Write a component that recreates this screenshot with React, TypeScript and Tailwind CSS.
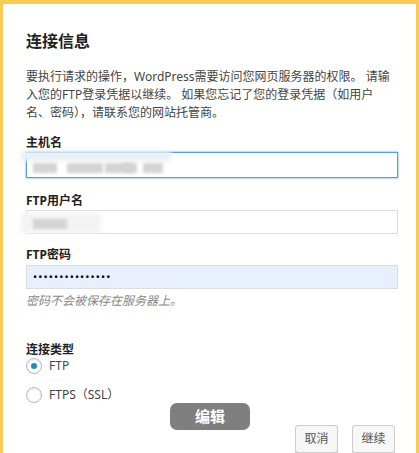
import React from "react";

const font = { fontFamily: '"Noto Sans", "Noto Sans CJK SC", sans-serif' };

function Blur({ className }: { className: string }) {
  return <div className={`absolute bg-[#d4d4d4] blur-[1.5px] ${className}`} />;
}

function Label({ children, className = "" }: { children: React.ReactNode; className?: string }) {
  return <div className={`text-[12px] font-bold text-[#222] leading-[17px] ${className}`}>{children}</div>;
}

function Radio({ checked, label, className = "" }: { checked?: boolean; label: string; className?: string }) {
  return (
    <div className={`flex items-center h-[18px] ${className}`}>
      <span className="w-[16px] h-[16px] rounded-full border border-[#b4b9be] flex items-center justify-center bg-white shadow-[inset_0_1px_2px_rgba(0,0,0,0.1)]">
        {checked && <span className="w-[6px] h-[6px] rounded-full bg-[#1e8cbe]" />}
      </span>
      <span className="ml-[7px] text-[12px] text-[#444]">{label}</span>
    </div>
  );
}

export default function App() {
  return (
    <div className="w-[419px] h-[453px] overflow-hidden bg-white relative" style={font}>
      <div className="h-full flex flex-col border-t-4 border-l-[3px] border-r-[3px] border-[#fbcb57] pl-[23px] pr-[18px]">
        <h2 className="pt-[25px] text-[16px] font-bold text-[#222] leading-[24px]">连接信息</h2>
        <p className="mt-[15px] text-[12px] leading-[18px] text-[#444] whitespace-nowrap">
          要执行请求的操作，WordPress需要访问您网页服务器的权限。 请输
          <br />
          入您的FTP登录凭据以继续。 如果您忘记了您的登录凭据（如用户
          <br />
          名、密码），请联系您的网站托管商。
        </p>

        <Label className="mt-[12px]">主机名</Label>
        <div className="relative mt-[1px] h-[27px] border border-[#5b9dd9] shadow-[0_0_2px_rgba(30,140,190,0.8)] bg-white">
          <div className="absolute left-[-6px] top-[-2px] w-[150px] h-[10px] bg-[#e9eff6] blur-[2px]" />
          <Blur className="left-[6px] top-[10px] w-[24px] h-[10px]" />
          <Blur className="left-[40px] top-[10px] w-[36px] h-[10px]" />
          <Blur className="left-[78px] top-[10px] w-[28px] h-[10px]" />
          <Blur className="left-[96px] top-[10px] w-[14px] h-[10px]" />
          <Blur className="left-[116px] top-[10px] w-[20px] h-[10px]" />
        </div>

        <Label className="mt-[14px]">FTP用户名</Label>
        <div className="relative mt-[1px] h-[25px] border border-[#ddd] bg-white">
          <div className="absolute left-[-6px] top-[2px] w-[80px] h-[20px] bg-[#f3f3f3] blur-[2px]" />
          <Blur className="left-[6px] top-[8px] w-[34px] h-[10px]" />
        </div>

        <Label className="mt-[12px]">FTP密码</Label>
        <div className="mt-[2px] h-[25px] border border-[#ddd] bg-[#e8f0fe] flex items-center pl-[6px] text-[11px] tracking-[1.1px] text-black">
          •••••••••••••••
        </div>
        <div className="mt-[3px] text-[12px] italic text-[#888] leading-[17px]">密码不会被保存在服务器上。</div>

        <Label className="mt-[32px]">连接类型</Label>
        <Radio checked label="FTP" className="-mt-[1px]" />
        <Radio label="FTPS（SSL）" className="mt-[11px]" />

        <div className="mt-[21px] flex justify-end gap-[14px] pr-[3px]">
          <button className="w-[43px] h-[28px] border border-[#ccc] rounded-[3px] bg-[#f7f7f7] text-[12px] text-[#555] shadow-[0_1px_0_#ccc]">取消</button>
          <button className="w-[43px] h-[28px] border border-[#ccc] rounded-[3px] bg-[#f7f7f7] text-[12px] text-[#555] shadow-[0_1px_0_#ccc]">继续</button>
        </div>
      </div>

      <div className="absolute left-[170px] top-[403px] w-[80px] h-[27px] rounded-[7px] bg-[#7f7f7f] flex items-center justify-center text-white text-[15px] font-bold">
        编辑
      </div>
    </div>
  );
}
